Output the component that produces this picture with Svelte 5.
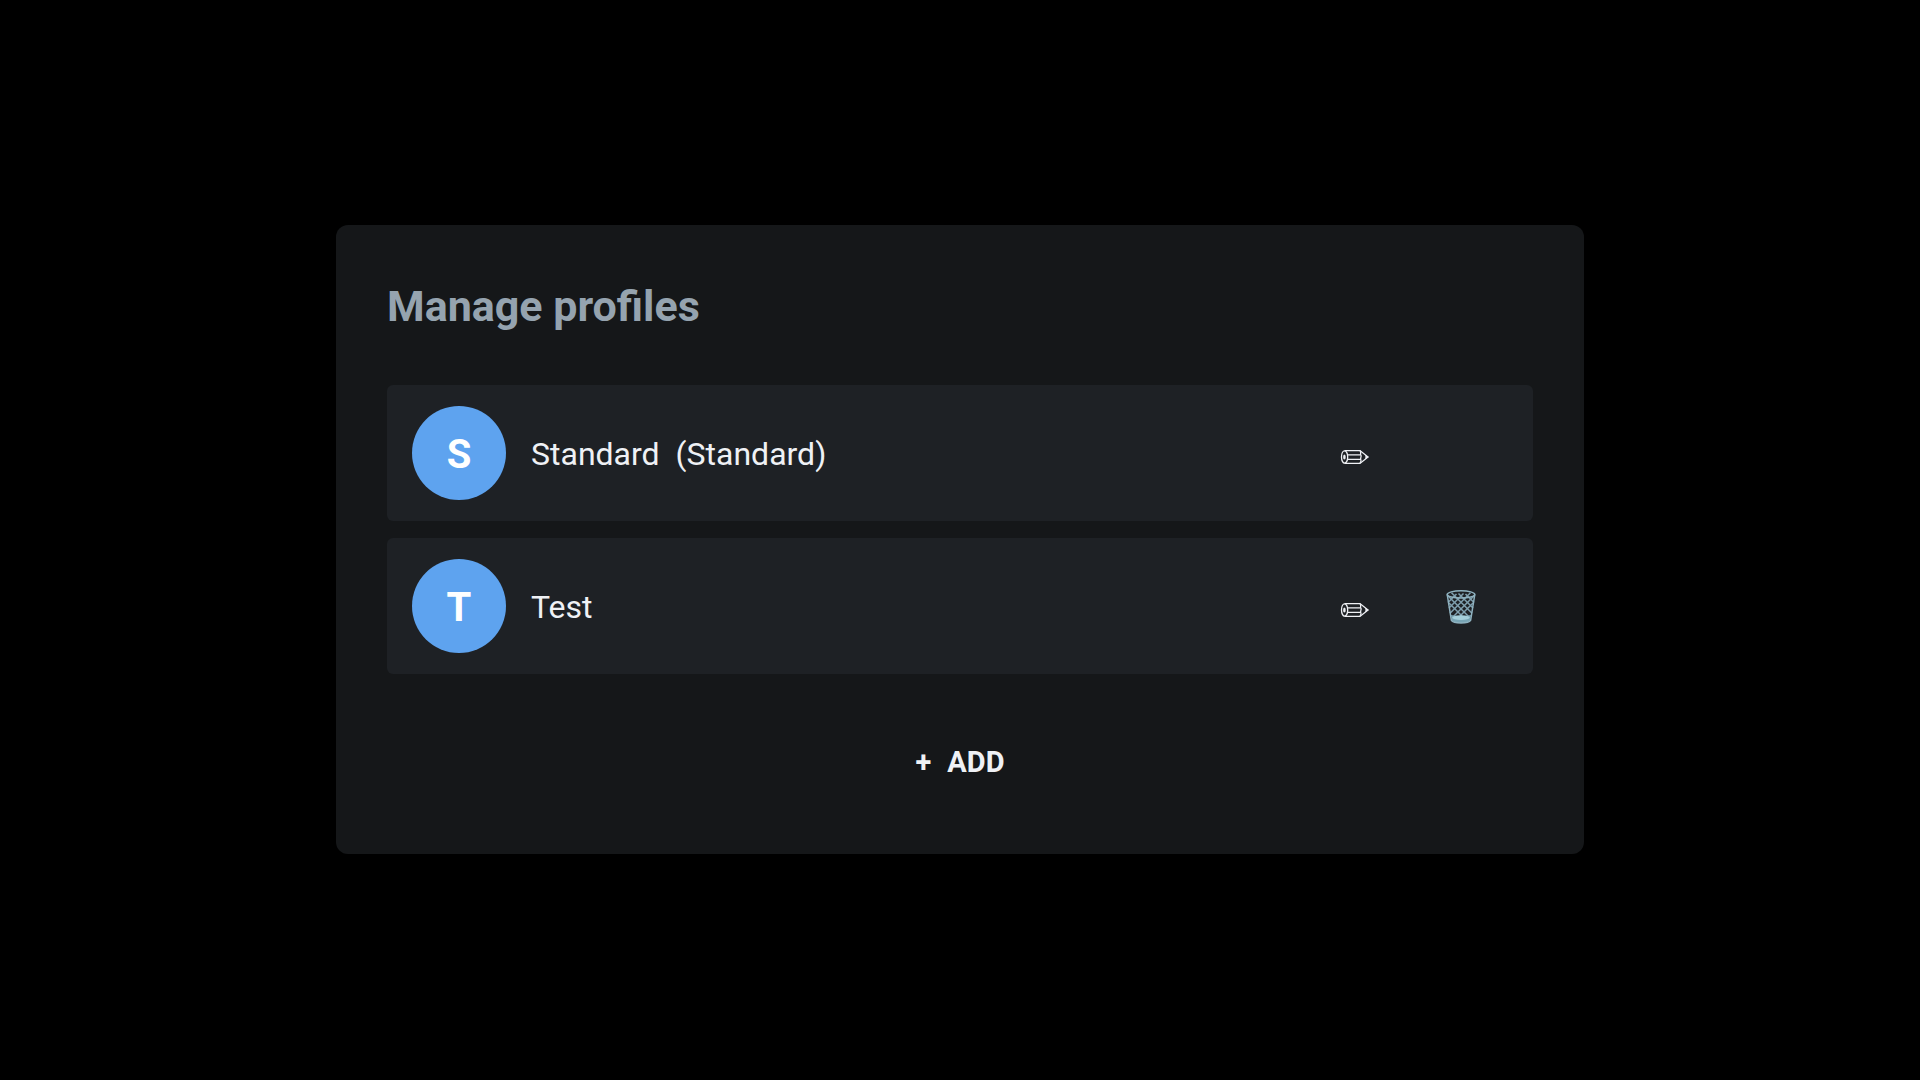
<script>
  let profiles = $state([
    { name: 'Standard', note: '(Standard)', removable: false },
    { name: 'Test', note: '', removable: true },
  ]);

  function add() {
    profiles.push({ name: 'Profile', note: '', removable: true });
  }
</script>

<main>
  <section class="card">
    <h1>Manage profiles</h1>
    <ul>
      {#each profiles as profile, i}
        <li>
          <span class="avatar" aria-hidden="true">{profile.name[0]}</span>
          <span class="name">
            <span>{profile.name}</span>
            {#if profile.note}<span>{profile.note}</span>{/if}
          </span>
          <button class="action" type="button" aria-label={`Edit ${profile.name}`}>
            <svg class="pencil" viewBox="0 0 30 16" width="30" height="16">
              <path d="M4.6 1.6H20L28 8L20 14.4H4.6" />
              <ellipse cx="4.6" cy="8" rx="3.1" ry="6.2" />
              <ellipse class="lead" cx="4.4" cy="8" rx="1.3" ry="2.6" />
              <path d="M7.8 5.8H20.6M7.8 10.4H20.6M20 1.8C21.6 3.4 20 5 20.8 6C22 7.4 20 8.6 20.8 10.2C21.6 11.6 20.8 13 20 14.2" />
              <path class="lead" d="M25.4 5.8L28.6 8L25.4 10.2Z" />
            </svg>
          </button>
          {#if profile.removable}
            <button
              class="action"
              type="button"
              aria-label={`Delete ${profile.name}`}
              onclick={() => profiles.splice(i, 1)}
            >
              <svg class="bin" viewBox="0 0 30 36" width="30" height="36">
                <path class="base" d="M5 26Q15 28 25 26L24 31.6Q23 34 15 34T6 31.6Z" />
                <path class="mesh" d="M1.6 6.5L22.6 27.5M3 14L16 27M5.5 3.8L26 24.3M12.5 4.5L27 19M19.5 5L28 13.5M28.4 6.5L7.4 27.5M27 14L14 27M24.5 3.8L4 24.3M17.5 4.5L3 19M10.5 5L2 13.5" />
                <path class="side" d="M1.2 5.5L5.4 31.4Q7 34 15 34T24.6 31.4L28.8 5.5" />
                <ellipse class="side" cx="15" cy="5.4" rx="13.8" ry="3.6" />
                <ellipse class="foot" cx="15" cy="28.6" rx="8.8" ry="2.4" />
              </svg>
            </button>
          {:else}
            <span class="action"></span>
          {/if}
        </li>
      {/each}
    </ul>
    <button class="add" type="button" onclick={add}><span>+</span><span>ADD</span></button>
  </section>
</main>

<style>
  :global(body) {
    background: #000;
  }
  main {
    box-sizing: border-box;
    min-height: 100vh;
    padding-bottom: 2px;
    display: grid;
    place-items: center;
    font-family: Roboto, 'Liberation Sans', sans-serif;
    color: #eff1f5;
  }
  .card {
    box-sizing: border-box;
    width: 65%;
    padding: 51px;
    border-radius: 12px;
    background: #151719;
    display: flex;
    flex-direction: column;
  }
  h1 {
    margin: 0 0 49px;
    font-size: 43px;
    line-height: 60px;
    font-weight: 700;
    color: #95a3af;
  }
  ul {
    list-style: none;
    margin: 0;
    padding: 0;
    display: flex;
    flex-direction: column;
    gap: 17px;
  }
  li {
    display: flex;
    align-items: center;
    padding: 21px 24px 21px 25px;
    border-radius: 6px;
    background: #1e2125;
  }
  .avatar {
    box-sizing: border-box;
    flex: none;
    width: 94px;
    height: 94px;
    padding-top: 4px;
    border-radius: 50%;
    background: #5ea3ef;
    color: #fff;
    display: grid;
    place-items: center;
    font-size: 40px;
    font-weight: 700;
  }
  .name {
    flex: 1;
    display: flex;
    gap: 16px;
    margin-left: 25px;
    padding-top: 2px;
    font-size: 32px;
    line-height: 40px;
  }
  button {
    border: 0;
    background: none;
    color: inherit;
    font-family: inherit;
    cursor: pointer;
  }
  .action {
    flex: none;
    width: 96px;
    height: 80px;
    padding: 0;
    display: grid;
    place-items: center;
  }
  .action + .action {
    margin-left: 10px;
  }
  svg {
    display: block;
    fill: none;
  }
  .pencil {
    margin-top: 8px;
    stroke: #eff1f5;
    stroke-width: 1.3;
  }
  .bin {
    margin-top: 2px;
  }
  .lead {
    fill: #eff1f5;
    stroke: none;
  }
  .mesh {
    stroke: #7f9fae;
    stroke-width: 1.5;
  }
  .side {
    stroke: #8fb2c0;
    stroke-width: 1.5;
  }
  .base {
    fill: #78a5b5;
  }
  .foot {
    fill: #a5cfdb;
  }
  .add {
    align-self: center;
    height: 82px;
    margin-top: 47px;
    padding: 0 25px;
    display: flex;
    align-items: center;
    gap: 16px;
    font-size: 29px;
    font-weight: 700;
  }
</style>
